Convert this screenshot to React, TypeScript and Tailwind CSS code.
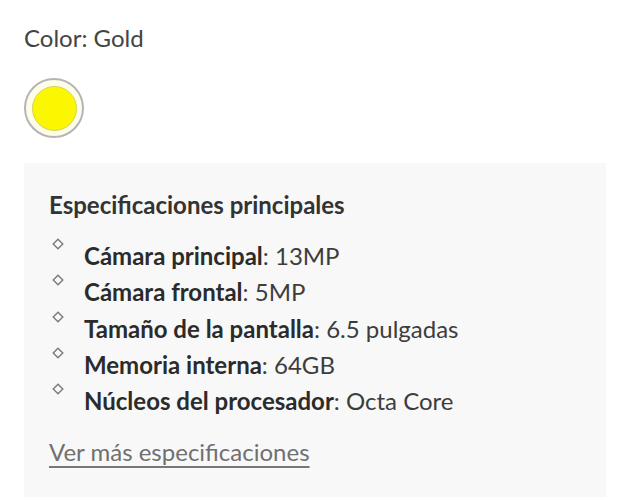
const specs = [
  { label: 'Cámara principal', value: '13MP' },
  { label: 'Cámara frontal', value: '5MP' },
  { label: 'Tamaño de la pantalla', value: '6.5 pulgadas' },
  { label: 'Memoria interna', value: '64GB' },
  { label: 'Núcleos del procesador', value: 'Octa Core' },
];

function Diamond() {
  return (
    <svg width="12" height="12" viewBox="0 0 12 12" className="shrink-0 mt-[-1px]">
      <path d="M6 1.2 L10.8 6 L6 10.8 L1.2 6 Z" fill="none" stroke="#7a7a7a" strokeWidth="1.4" />
    </svg>
  );
}

export default function App() {
  return (
    <main className="min-h-[500px] bg-white px-6 pt-6 font-['Lato',sans-serif] text-[#3a3a3a]">
      <p className="text-[24px] leading-[28px] text-[#444]">Color: Gold</p>

      <div className="mt-[26px] w-[60px] h-[60px] rounded-full border-2 border-[#b5b5b8] bg-[#fdfde8] flex items-center justify-center">
        <div className="w-[45px] h-[45px] rounded-full bg-[#fbf700] border border-[#d8d35a]" />
      </div>

      <section className="mt-[25px] w-[582px] bg-[#f8f8f8] px-[25px] pt-[27px] pb-[30px]">
        <h2 className="text-[24px] leading-[30px] font-bold text-[#333]">Especificaciones principales</h2>

        <ul className="mt-[19px] flex flex-col">
          {specs.map((s) => (
            <li key={s.label} className="flex items-start gap-[20px] pl-[3px] h-[36.25px] text-[24px] leading-[36px]">
              <Diamond />
              <span className="mt-[-1px]">
                <span className="font-bold text-[#2b2b2b]">{s.label}</span>
                <span className="text-[#3d3d3d]">: {s.value}</span>
              </span>
            </li>
          ))}
        </ul>

        <a href="#" className="mt-[17px] inline-block text-[24px] leading-[30px] text-[#707070] underline underline-offset-[5px] decoration-[#777]">
          Ver más especificaciones
        </a>
      </section>
    </main>
  );
}
